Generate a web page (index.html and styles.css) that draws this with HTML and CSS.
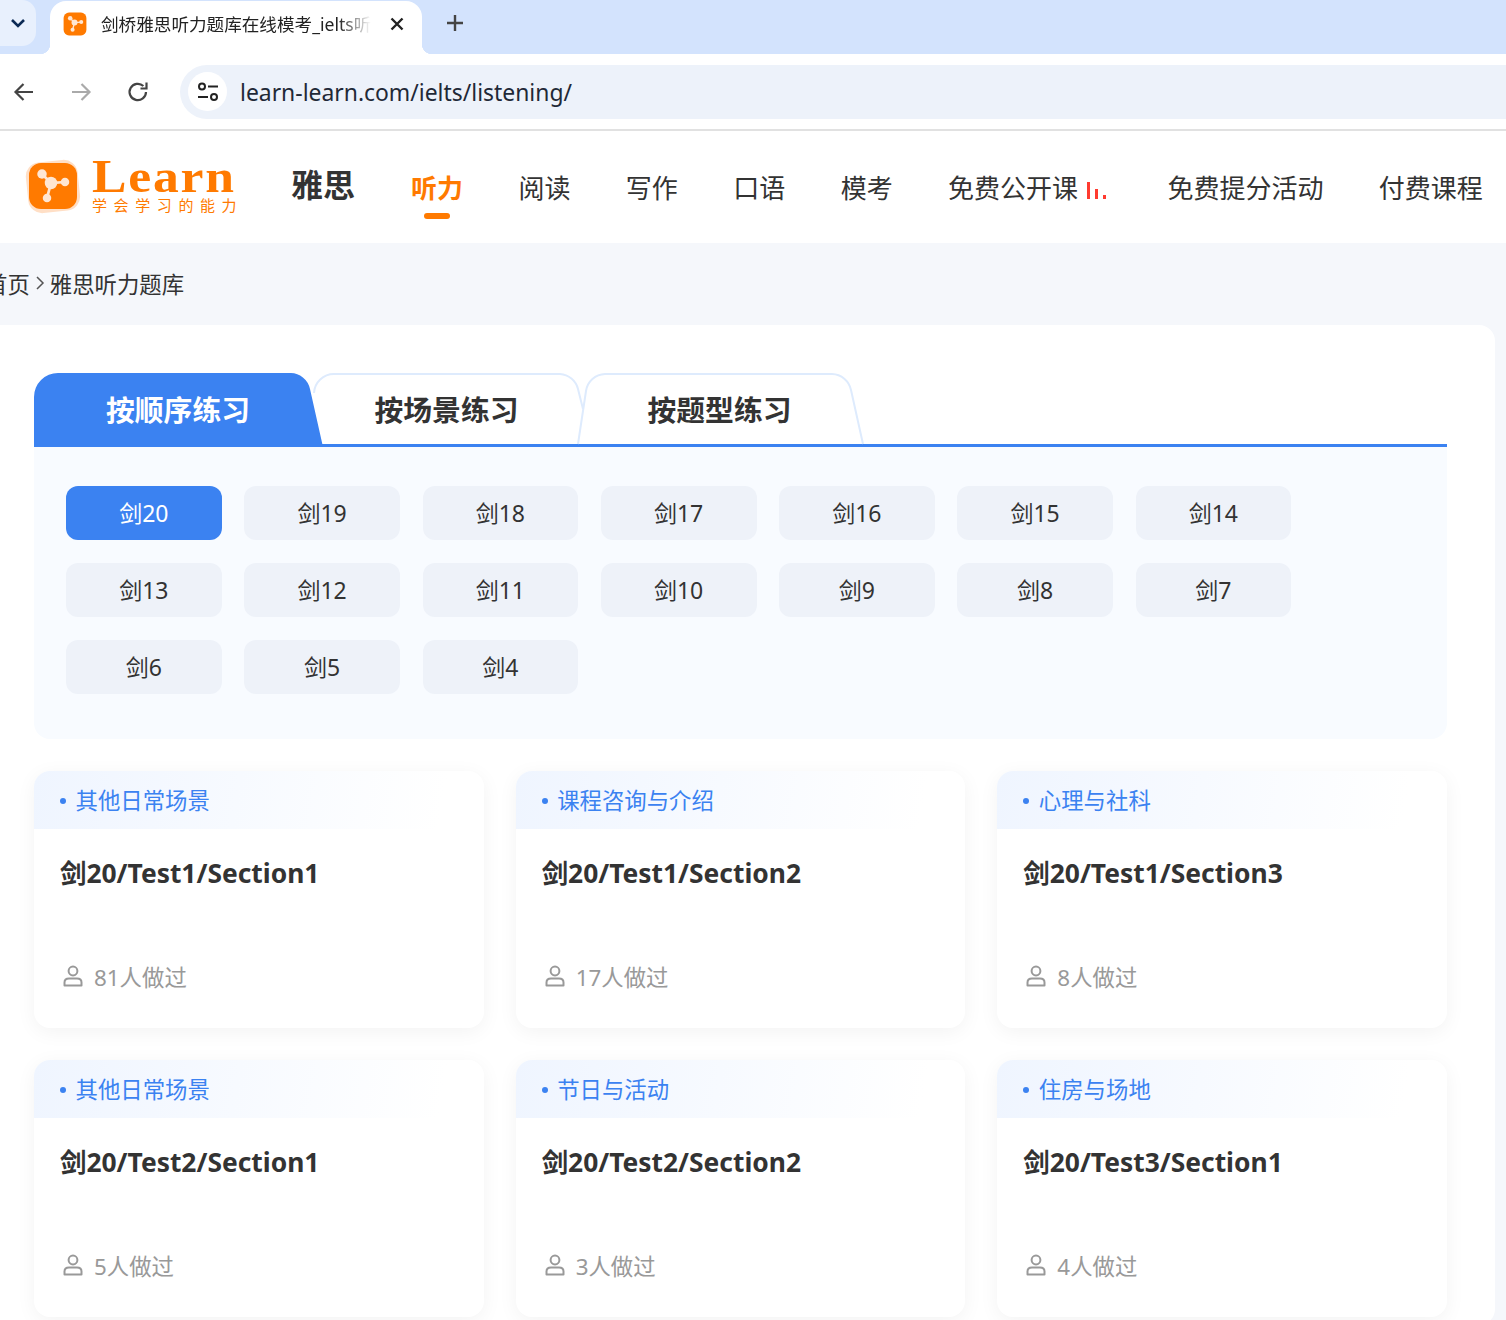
FILE: index.html

```html
<!DOCTYPE html>
<html lang="zh-CN">
<head>
  <meta charset="UTF-8" />
  <meta name="viewport" content="width=device-width, initial-scale=1" />
  <title>剑桥雅思听力题库在线模考</title>
  <link rel="stylesheet" href="styles.css">
</head>
<body>

<svg class="defs" width="0" height="0">
  <symbol id="molecule" viewBox="0 0 40 40">
    <path d="M12 10.4 L19.2 17.6 L30.4 16.8 M19.2 17.6 L16 29.6" fill="none" stroke="#ffe6d2" stroke-width="2.2"/>
    <circle cx="12" cy="10.4" r="3.8" fill="#ffe6d2"/>
    <circle cx="19.2" cy="17.6" r="5" fill="#ffe6d2"/>
    <circle cx="30.4" cy="16.8" r="3.4" fill="#ffe6d2"/>
    <circle cx="16" cy="29.6" r="3.4" fill="#ffe6d2"/>
  </symbol>
  <symbol id="person" viewBox="0 0 20 22">
    <circle cx="10" cy="6" r="4.4" fill="none" stroke="#999" stroke-width="2"/>
    <path d="M1.5 20.5 V17.5 C1.5 15 3.5 13.6 6 13.6 H14 C16.5 13.6 18.5 15 18.5 17.5 V20.5 Z" fill="none" stroke="#999" stroke-width="2" stroke-linejoin="round"/>
  </symbol>
</svg>

<div class="browser">
  <div class="tabstrip">
    <div class="tab-search">
      <svg width="18" height="18" viewBox="0 0 18 18"><path d="M3 6 L9 12 L15 6" fill="none" stroke="#0b2a55" stroke-width="2.6"/></svg>
    </div>
    <div class="browser-tab">
      <svg class="favicon" width="24" height="24" viewBox="0 0 40 40">
        <rect x="1" y="1" width="38" height="38" rx="9" fill="#ff7a00"/>
        <use href="#molecule" width="40" height="40"/>
      </svg>
      <span class="tab-title">剑桥雅思听力题库在线模考_ielts听力</span>
      <svg class="tab-close" width="16" height="16" viewBox="0 0 16 16"><path d="M2.5 2.5 L13.5 13.5 M13.5 2.5 L2.5 13.5" stroke="#222" stroke-width="2.4"/></svg>
    </div>
    <svg class="tab-new" width="20" height="20" viewBox="0 0 20 20"><path d="M10 2 V18 M2 10 H18" stroke="#444" stroke-width="2.4"/></svg>
  </div>
  <div class="toolbar">
    <svg width="24" height="24" viewBox="0 0 24 24"><path d="M21 12 H4 M11.5 4 L3.5 12 L11.5 20" fill="none" stroke="#444" stroke-width="2.2"/></svg>
    <svg width="24" height="24" viewBox="0 0 24 24"><path d="M3 12 H20 M12.5 4 L20.5 12 L12.5 20" fill="none" stroke="#aaa" stroke-width="2.2"/></svg>
    <svg width="24" height="24" viewBox="0 0 24 24"><path d="M20 12 A8.2 8.2 0 1 1 17.4 6 M20.5 2.5 V8.5 H14.5" fill="none" stroke="#444" stroke-width="2.2"/></svg>
    <div class="omnibox">
      <span class="site-info">
        <svg width="24" height="24" viewBox="0 0 24 24">
          <circle cx="6" cy="6.5" r="3" fill="none" stroke="#222" stroke-width="2"/>
          <path d="M12 6.5 H22 M2 17 H12" stroke="#222" stroke-width="2.2"/>
          <circle cx="18" cy="17" r="3" fill="none" stroke="#222" stroke-width="2"/>
        </svg>
      </span>
      <span class="url">learn-learn.com/ielts/listening/</span>
    </div>
  </div>
</div>

<header class="site-header">
  <a class="logo" href="#">
    <svg class="logo-mark" width="58" height="56" viewBox="0 0 58 56">
      <rect x="3" y="2" width="52" height="51" rx="14" fill="#ffdfc6" transform="rotate(-6 29 28)"/>
      <rect x="5" y="4" width="48" height="46" rx="12" fill="#ff7a00"/>
      <use href="#molecule" x="3" y="2" width="50" height="50"/>
    </svg>
    <span class="logo-text">
      <span class="logo-name">Learn</span>
      <span class="logo-sub">学会学习的能力</span>
    </span>
  </a>
  <div class="subject">雅思</div>
  <nav class="main-nav">
    <a class="active" href="#">听力</a>
    <a href="#">阅读</a>
    <a href="#">写作</a>
    <a href="#">口语</a>
    <a href="#">模考</a>
    <a class="live" href="#">免费公开课<span class="bars"><i class="b1"></i><i class="b2"></i><i class="b3"></i></span></a>
    <a href="#">免费提分活动</a>
    <a href="#">付费课程</a>
  </nav>
</header>

<div class="crumbs">
  <a href="#">首页</a>
  <svg width="10" height="16" viewBox="0 0 10 16"><path d="M2 2 L8 8 L2 14" fill="none" stroke="#555" stroke-width="1.5"/></svg>
  <span>雅思听力题库</span>
</div>

<main class="content">
  <div class="tabs">
    <div class="tab tab-one">
      <svg width="289" height="74" viewBox="0 0 289 74"><path d="M0 74 V24 A24 24 0 0 1 24 0 H256 A20 20 0 0 1 276 16 L289 74 Z" fill="#3b82f1"/></svg>
      <span>按顺序练习</span>
    </div>
    <div class="tab tab-two">
      <svg width="272" height="74" viewBox="0 0 272 74"><path d="M1 20 A20 20 0 0 1 21 1 H247 A20 20 0 0 1 265 16 L270 36" fill="#fff" stroke="#deebfd" stroke-width="2"/></svg>
      <span>按场景练习</span>
    </div>
    <div class="tab tab-three">
      <svg width="287" height="74" viewBox="0 0 287 74"><path d="M1 71 L9 18 A20 20 0 0 1 28 1 H255 A20 20 0 0 1 274 17 L286 71" fill="#fff" stroke="#deebfd" stroke-width="2"/></svg>
      <span>按题型练习</span>
    </div>
  </div>

  <div class="books">
    <a class="book selected" href="#">剑20</a>
    <a class="book" href="#">剑19</a>
    <a class="book" href="#">剑18</a>
    <a class="book" href="#">剑17</a>
    <a class="book" href="#">剑16</a>
    <a class="book" href="#">剑15</a>
    <a class="book" href="#">剑14</a>
    <a class="book" href="#">剑13</a>
    <a class="book" href="#">剑12</a>
    <a class="book" href="#">剑11</a>
    <a class="book" href="#">剑10</a>
    <a class="book" href="#">剑9</a>
    <a class="book" href="#">剑8</a>
    <a class="book" href="#">剑7</a>
    <a class="book" href="#">剑6</a>
    <a class="book" href="#">剑5</a>
    <a class="book" href="#">剑4</a>
  </div>

  <div class="cards">
    <div class="card">
      <div class="card-tag">其他日常场景</div>
      <div class="card-body">
        <div class="card-title">剑20/Test1/Section1</div>
        <div class="card-meta"><svg width="20" height="22"><use href="#person"/></svg>81人做过</div>
      </div>
    </div>
    <div class="card">
      <div class="card-tag">课程咨询与介绍</div>
      <div class="card-body">
        <div class="card-title">剑20/Test1/Section2</div>
        <div class="card-meta"><svg width="20" height="22"><use href="#person"/></svg>17人做过</div>
      </div>
    </div>
    <div class="card">
      <div class="card-tag">心理与社科</div>
      <div class="card-body">
        <div class="card-title">剑20/Test1/Section3</div>
        <div class="card-meta"><svg width="20" height="22"><use href="#person"/></svg>8人做过</div>
      </div>
    </div>
    <div class="card">
      <div class="card-tag">其他日常场景</div>
      <div class="card-body">
        <div class="card-title">剑20/Test2/Section1</div>
        <div class="card-meta"><svg width="20" height="22"><use href="#person"/></svg>5人做过</div>
      </div>
    </div>
    <div class="card">
      <div class="card-tag">节日与活动</div>
      <div class="card-body">
        <div class="card-title">剑20/Test2/Section2</div>
        <div class="card-meta"><svg width="20" height="22"><use href="#person"/></svg>3人做过</div>
      </div>
    </div>
    <div class="card">
      <div class="card-tag">住房与场地</div>
      <div class="card-body">
        <div class="card-title">剑20/Test3/Section1</div>
        <div class="card-meta"><svg width="20" height="22"><use href="#person"/></svg>4人做过</div>
      </div>
    </div>
  </div>
</main>

</body>
</html>
```

FILE: styles.css

```css
html, body {
  margin: 0;
  height: 1320px;
  overflow: hidden;
}
body {
  background: #f5f7fb;
  color: #333;
  font-family: "Noto Sans", "Noto Sans CJK SC", sans-serif;
}
a {
  color: inherit;
  text-decoration: none;
}
.defs {
  position: absolute;
}

/* browser chrome */
.browser {
  background: #fff;
  border-bottom: 2px solid #e1e1e1;
}
.tabstrip {
  height: 54px;
  background: #d3e3fd;
  display: flex;
  align-items: flex-start;
}
.tab-search {
  width: 40px;
  height: 46px;
  margin-left: -4px;
  background: #e8f0fd;
  border-radius: 0 14px 14px 0;
  display: flex;
  align-items: center;
  justify-content: center;
  padding-left: 4px;
  box-sizing: border-box;
  flex-shrink: 0;
}
.browser-tab {
  width: 372px;
  height: 53px;
  margin: 1px 0 0 14px;
  background: #fff;
  border-radius: 16px 16px 0 0;
  display: flex;
  align-items: center;
  position: relative;
  padding: 0 0 8px 13px;
  box-sizing: border-box;
}
.browser-tab::before,
.browser-tab::after {
  content: "";
  position: absolute;
  bottom: 0;
  width: 10px;
  height: 10px;
}
.browser-tab::before {
  left: -10px;
  background: radial-gradient(circle at 0 0, transparent 10px, #fff 10.5px);
}
.browser-tab::after {
  right: -10px;
  background: radial-gradient(circle at 100% 0, transparent 10px, #fff 10.5px);
}
.tab-title {
  width: 270px;
  margin-left: 14px;
  font-size: 17.6px;
  color: #222;
  white-space: nowrap;
  overflow: hidden;
  -webkit-mask-image: linear-gradient(to right, #000 88%, transparent);
  mask-image: linear-gradient(to right, #000 88%, transparent);
}
.tab-close {
  margin-left: 18px;
}
.tab-new {
  margin: 13px 0 0 23px;
}
.toolbar {
  height: 75px;
  display: flex;
  align-items: center;
  padding: 0 0 0 12px;
  gap: 33px;
  overflow: hidden;
}
.omnibox {
  flex: 1;
  height: 54px;
  margin: 0 -40px 0 -3px;
  background: #edf2fa;
  border-radius: 27px;
  display: flex;
  align-items: center;
  padding-left: 8px;
}
.site-info {
  width: 39px;
  height: 39px;
  background: #fff;
  border-radius: 50%;
  display: flex;
  align-items: center;
  justify-content: center;
}
.url {
  margin-left: 13px;
  padding-top: 2px;
  font-family: "Noto Sans", sans-serif;
  font-size: 22.9px;
  color: #1f2937;
}

/* site header */
.site-header {
  height: 112px;
  background: #fff;
  display: flex;
  align-items: center;
  padding-left: 24px;
}
.logo {
  display: flex;
  align-items: center;
  width: 267px;
  color: #ff7a00;
}
.logo-text {
  margin-left: 10px;
  display: flex;
  flex-direction: column;
  padding-bottom: 2px;
}
.logo-name {
  font-family: "Liberation Serif", serif;
  font-weight: 700;
  font-size: 47px;
  line-height: 38px;
  letter-spacing: 1.6px;
  transform: scaleX(1.1);
  transform-origin: left;
}
.logo-sub {
  font-size: 15px;
  line-height: 20px;
  letter-spacing: 6.6px;
  white-space: nowrap;
}
.subject {
  font-size: 32px;
  font-weight: 700;
  margin-right: 56px;
  padding-bottom: 8px;
}
.main-nav {
  display: flex;
  gap: 55.4px;
  font-size: 26px;
  white-space: nowrap;
}
.main-nav a {
  position: relative;
  display: flex;
  align-items: center;
}
.main-nav .active {
  color: #ff7a00;
  font-weight: 700;
}
.main-nav .active::after {
  content: "";
  position: absolute;
  left: 13px;
  right: 13px;
  bottom: -13px;
  height: 6px;
  border-radius: 3px;
  background: #ff7a00;
}
.bars {
  display: flex;
  align-items: flex-end;
  gap: 5px;
  height: 17px;
  margin: 7px 6px 0 9px;
}
.bars i {
  width: 3px;
  background: #ff3b30;
}
.bars .b1 { height: 17px; }
.bars .b2 { height: 10px; }
.bars .b3 { height: 4px; }

.crumbs {
  height: 80px;
  padding-bottom: 2px;
  margin-left: -15px;
  display: flex;
  align-items: center;
  gap: 5px;
  font-size: 22.4px;
}

/* white panel */
.content {
  margin-left: -20px;
  width: 1515px;
  box-sizing: border-box;
  background: #fff;
  border-radius: 16px;
  padding: 48px 48px 0 54px;
  height: 1000px;
}
.tabs {
  display: flex;
  height: 71px;
  border-bottom: 3px solid #3b82f1;
  align-items: flex-start;
}
.tab {
  position: relative;
  height: 74px;
  display: flex;
  align-items: center;
  justify-content: center;
  font-size: 28.8px;
  font-weight: 700;
  padding-bottom: 4px;
  box-sizing: border-box;
}
.tab svg {
  position: absolute;
  left: 0;
  top: 0;
}
.tab span {
  position: relative;
}
.tab-one {
  width: 288px;
  color: #fff;
  z-index: 3;
}
.tab-two {
  width: 267px;
  margin-left: -9px;
  z-index: 1;
}
.tab-three {
  width: 285px;
  margin-left: -3px;
  z-index: 2;
}
.books {
  background: #f8fbff;
  border-radius: 0 0 16px 16px;
  padding: 39px 32px 45px;
  display: grid;
  grid-template-columns: repeat(7, 155.75px);
  column-gap: 22.5px;
  row-gap: 23px;
}
.book {
  height: 52px;
  padding-bottom: 2px;
  border-radius: 12px;
  background: #eef2f9;
  display: flex;
  align-items: center;
  justify-content: center;
  font-size: 23px;
}
.book.selected {
  background: #3b82f1;
  color: #fff;
}

/* cards */
.cards {
  margin-top: 32px;
  display: grid;
  grid-template-columns: repeat(3, 1fr);
  gap: 32px;
}
.card {
  height: 257px;
  background: #fff;
  border-radius: 16px;
  box-shadow: 0 4px 20px rgba(0, 0, 0, 0.05);
  overflow: hidden;
  display: flex;
  flex-direction: column;
}
.card-tag {
  height: 58px;
  box-sizing: border-box;
  padding: 0 0 2px 41.5px;
  display: flex;
  align-items: center;
  position: relative;
  font-size: 22.4px;
  color: #3b82f1;
  background: linear-gradient(100deg, #eff5ff, #fff 90%);
}
.card-tag::before {
  content: "";
  position: absolute;
  left: 26px;
  top: 27px;
  width: 6px;
  height: 6px;
  border-radius: 50%;
  background: #3b82f1;
}
.card-body {
  flex: 1;
  padding: 23px 26px 35px;
  display: flex;
  flex-direction: column;
  justify-content: space-between;
}
.card-title {
  font-size: 26.4px;
  font-weight: 700;
  line-height: 42px;
}
.card-meta {
  display: flex;
  align-items: center;
  gap: 11px;
  font-size: 22.4px;
  line-height: 30px;
  color: #999;
  padding-left: 3px;
}
.card-meta svg {
  margin-bottom: 4px;
}
```
